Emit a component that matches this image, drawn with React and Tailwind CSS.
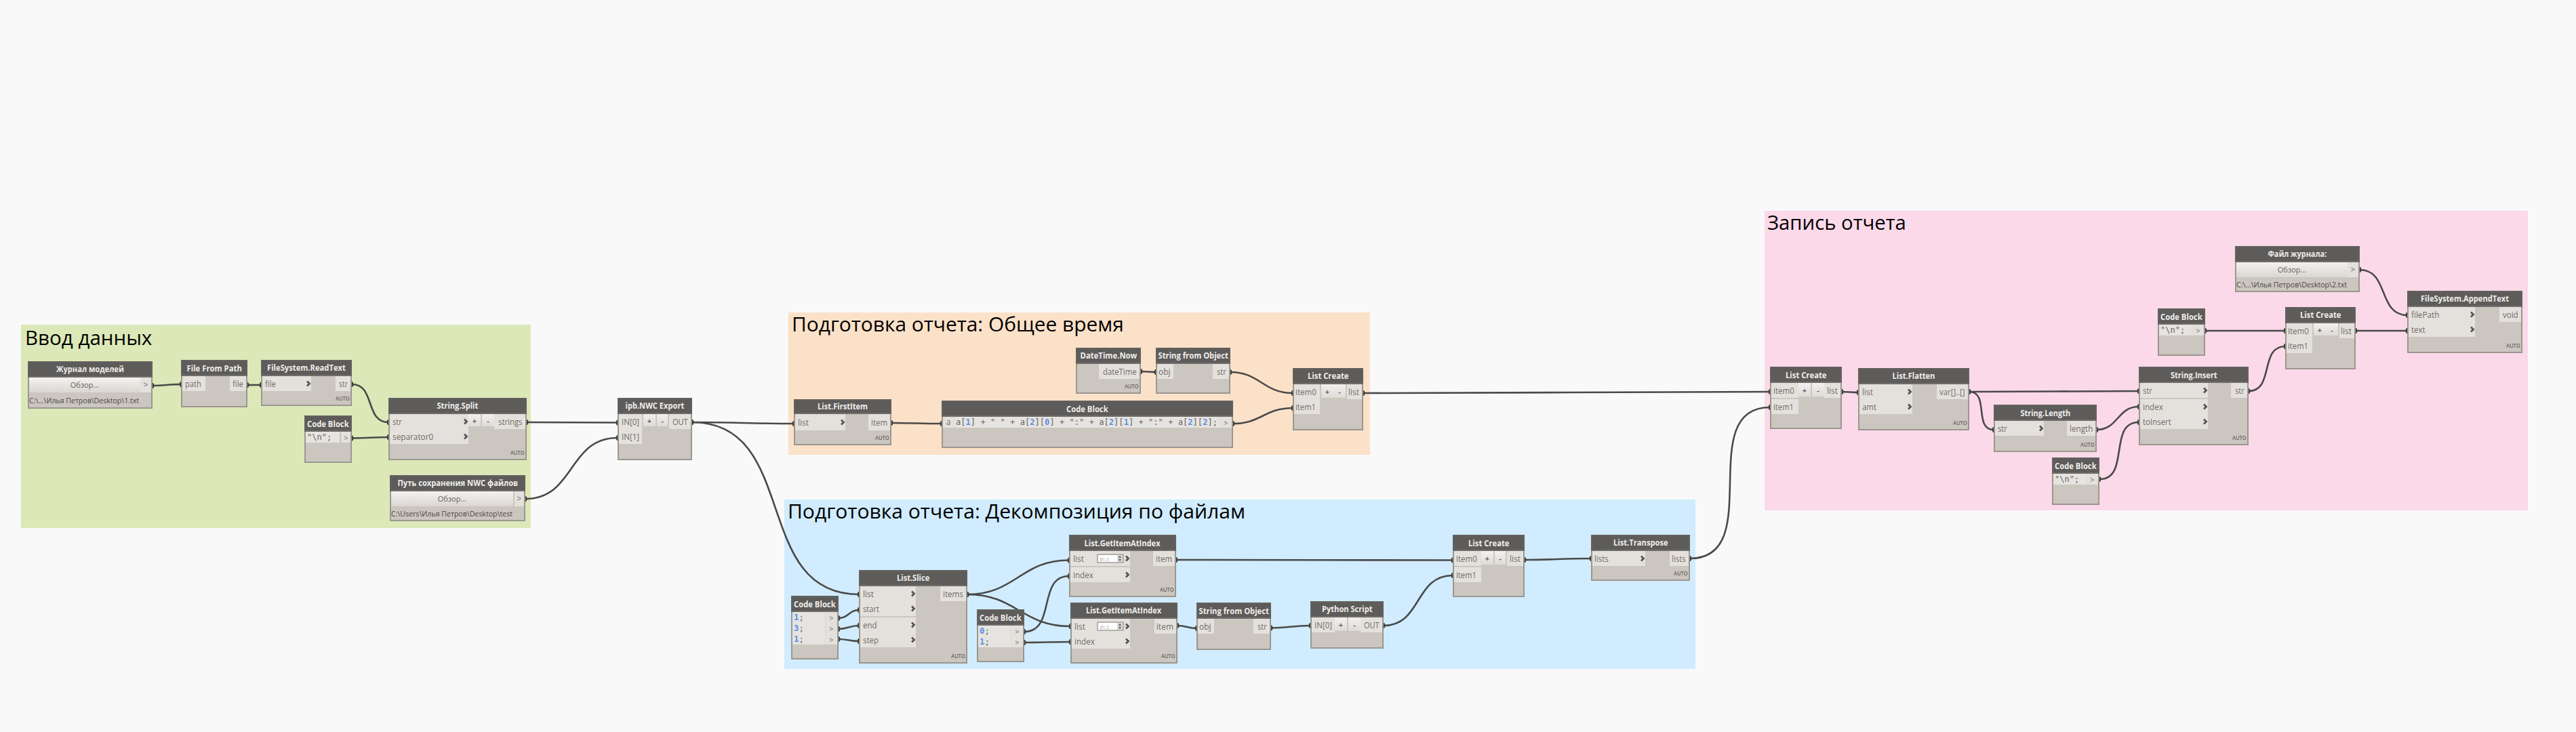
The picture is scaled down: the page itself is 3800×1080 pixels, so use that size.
import React, { useLayoutEffect, useRef, useState } from "react";

const SANS = "font-['Open_Sans','Noto_Sans',sans-serif]";
const MONO = "font-['DejaVu_Sans_Mono','Liberation_Mono',monospace]";

/* Text squeezed or stretched horizontally to a given width. */
function Fit({ w, origin = "center", className = "", children }) {
  const ref = useRef(null);
  const [k, setK] = useState(1);
  useLayoutEffect(() => {
    if (w && ref.current) setK(w / ref.current.offsetWidth);
  }, [w]);
  return (
    <span
      ref={ref}
      className={"inline-block shrink-0 whitespace-pre " + className}
      style={{ transform: `scaleX(${k})`, transformOrigin: origin }}
    >
      {children}
    </span>
  );
}

const groups = [
  { x: 31, y: 479, w: 752, h: 300, title: "Ввод данных", tx: 6, ty: 2, tw: 187, bg: "bg-[#dce8b8]" },
  { x: 1163, y: 461, w: 858, h: 210, title: "Подготовка отчета: Общее время", tx: 5, ty: 0, tw: 490, bg: "bg-[#fbe1c8]" },
  { x: 1157, y: 737, w: 1344, h: 250, title: "Подготовка отчета: Декомпозиция по файлам", tx: 5, ty: 0, tw: 675, bg: "bg-[#d0ecfe]" },
  { x: 2603, y: 311, w: 1126, h: 442, title: "Запись отчета", tx: 4, ty: 0, tw: 205, bg: "bg-[#fbd9e9]" },
];

/*
 * iw / ow: widths of the port columns.
 * btn: [left gap, width of "+", gap, width of "-", height].
 * low: the title sits one pixel lower in its bar.
 */
const nodes = [
  { k: "file", x: 41, y: 533, w: 184, h: 70, title: "Журнал моделей", tw: 100, path: "C:\\...\\Илья Петров\\Desktop\\1.txt", pw: 162, bw: 164, gap: 0 },
  { x: 267, y: 531, w: 98, h: 70, low: 1, title: "File From Path", tw: 81, ins: [["path", 24]], iw: 34, out: ["file", 16], ow: 24 },
  { x: 385, y: 531, w: 134, h: 68, title: "FileSystem.ReadText", tw: 116, ins: [["file", 16]], iw: 72, arrow: 1, out: ["str", 13], ow: 22, auto: 1 },
  { x: 573, y: 587, w: 204, h: 92, title: "String.Split", tw: 61, ins: [["str", 14], ["separator0", 60]], iw: 116, arrow: 1, btn: [0, 18, 2, 18, 18], out: ["strings", 36], ow: 46, auto: 1 },
  { k: "code", x: 449, y: 613, w: 70, h: 70, lines: ['"\\n";'], cw: 50, gap: 2 },
  { k: "file", x: 575, y: 701, w: 200, h: 68, title: "Путь сохранения NWC файлов", tw: 178, path: "C:\\Users\\Илья Петров\\Desktop\\test", pw: 179, bw: 180, gap: 2 },
  { x: 911, y: 587, w: 110, h: 92, title: "ipb.NWC Export", tw: 87, ins: [["IN[0]", 26], ["IN[1]", 26]], iw: 34, btn: [2, 18, 2, 16, 18], out: ["OUT", 23], ow: 32 },
  { x: 1171, y: 589, w: 144, h: 68, hh: 22, rh: 24, title: "List.FirstItem", tw: 74, ins: [["list", 16]], iw: 74, arrow: 1, out: ["item", 24], ow: 32, auto: 1 },
  { k: "long", x: 1389, y: 591, w: 430, h: 70 },
  { x: 1587, y: 513, w: 96, h: 68, title: "DateTime.Now", tw: 84, ins: [], iw: 0, out: ["dateTime", 50], ow: 60, auto: 1 },
  { x: 1705, y: 513, w: 110, h: 68, title: "String from Object", tw: 103, ins: [["obj", 18]], iw: 24, ip: 2, out: ["str", 14], ow: 24 },
  { x: 1907, y: 543, w: 104, h: 92, title: "List Create", tw: 60, ins: [["item0", 31], ["item1", 30]], iw: 38, ip: 2, btn: [2, 18, 0, 18, 20], out: ["list", 16], ow: 22 },
  { k: "code", x: 1167, y: 879, w: 70, h: 94, lines: ["1;", "3;", "1;"], cw: 48, gap: 0 },
  { x: 1267, y: 841, w: 160, h: 138, title: "List.Slice", tw: 48, ins: [["list", 16], ["start", 24], ["end", 20], ["step", 23]], iw: 82, split: 2, arrow: 1, out: ["items", 30], ow: 38, auto: 1 },
  { k: "code", x: 1441, y: 899, w: 70, h: 78, lines: ["0;", "1;"], cw: 48, gap: 0 },
  { x: 1577, y: 789, w: 158, h: 92, low: 1, title: "List.GetItemAtIndex", tw: 112, ins: [["list", 16], ["index", 30]], iw: 88, split: 1, spin: 1, arrow: 1, out: ["item", 24], ow: 32, auto: 1 },
  { x: 1579, y: 889, w: 158, h: 90, title: "List.GetItemAtIndex", tw: 111, ins: [["list", 16], ["index", 30]], iw: 86, spin: 1, arrow: 1, out: ["item", 25], ow: 32, auto: 1 },
  { x: 1765, y: 889, w: 110, h: 70, low: 1, title: "String from Object", tw: 103, ins: [["obj", 18]], iw: 24, ip: 2, out: ["str", 14], ow: 24 },
  { x: 1933, y: 887, w: 108, h: 70, title: "Python Script", tw: 75, ins: [["IN[0]", 26]], iw: 34, ip: 4, btn: [0, 18, 2, 18, 20], out: ["OUT", 23], ow: 32 },
  { x: 2143, y: 789, w: 106, h: 92, low: 1, title: "List Create", tw: 60, ins: [["item0", 31], ["item1", 30]], iw: 40, split: 1, ip: 3, btn: [0, 18, 2, 16, 20], out: ["list", 16], ow: 24 },
  { x: 2347, y: 789, w: 146, h: 68, title: "List.Transpose", tw: 81, ins: [["lists", 21]], iw: 78, ip: 3, arrow: 1, out: ["lists", 21], ow: 28, auto: 1 },
  { x: 2611, y: 541, w: 106, h: 92, low: 1, title: "List Create", tw: 60, ins: [["item0", 31], ["item1", 30]], iw: 40, split: 1, ip: 3, btn: [0, 18, 2, 18, 20], out: ["list", 16], ow: 24 },
  { x: 2741, y: 543, w: 164, h: 92, title: "List.Flatten", tw: 63, ins: [["list", 16], ["amt", 21]], iw: 78, arrow: 1, out: ["var[]..[]", 38], ow: 46, auto: 1 },
  { x: 2941, y: 597, w: 152, h: 70, low: 1, title: "String.Length", tw: 74, ins: [["str", 14]], iw: 72, arrow: 1, out: ["length", 34], ow: 42, auto: 1 },
  { k: "code", x: 3027, y: 675, w: 70, h: 70, lines: ['"\\n";'], cw: 48, gap: 0 },
  { k: "code", x: 3183, y: 455, w: 70, h: 70, lines: ['"\\n";'], cw: 48, gap: 0 },
  { x: 3155, y: 541, w: 162, h: 116, low: 1, title: "String.Insert", tw: 69, ins: [["str", 14], ["index", 30], ["toInsert", 42]], iw: 100, split: 1, arrow: 1, out: ["str", 14], ow: 24, auto: 1 },
  { k: "file", x: 3297, y: 363, w: 184, h: 68, title: "Файл журнала:", tw: 87, path: "C:\\...\\Илья Петров\\Desktop\\2.txt", pw: 163, bw: 164, gap: 0 },
  { x: 3371, y: 453, w: 104, h: 92, title: "List Create", tw: 60, ins: [["item0", 31], ["item1", 30]], iw: 38, ip: 2, btn: [2, 18, 0, 18, 18], out: ["list", 16], ow: 22 },
  { x: 3551, y: 429, w: 170, h: 92, title: "FileSystem.AppendText", tw: 130, ins: [["filePath", 41], ["text", 21]], iw: 98, ip: 4, arrow: 1, out: ["void", 23], ow: 32, auto: 1 },
];

const wires = [
  [225, 569, 267, 567], [365, 568, 385, 568], [519, 567, 573, 623], [519, 646.5, 573, 645],
  [777, 623, 911, 623.5], [775, 736, 911, 646], [1021, 623, 1171, 625], [1021, 623, 1267, 877],
  [1315, 624, 1389, 625], [1683, 548, 1705, 549], [1815, 549, 1907, 580], [1819, 625, 1907, 602],
  [2011, 580, 2611, 578], [1237, 912, 1267, 900], [1237, 928, 1267, 923], [1237, 943, 1267, 946],
  [1427, 877, 1577, 826.5], [1427, 877, 1579, 924], [1511, 932, 1577, 850], [1511, 948, 1579, 947],
  [1735, 826, 2143, 826.5], [1737, 923, 1765, 927], [1875, 926.5, 1933, 923], [2041, 923, 2143, 849],
  [2249, 826, 2347, 824], [2493, 824, 2611, 601], [2717, 578, 2741, 579], [2905, 578, 3155, 577],
  [2905, 578, 2941, 634], [3093, 634, 3155, 600], [3097, 707, 3155, 623], [3253, 488, 3371, 488],
  [3317, 577, 3371, 511], [3475, 488, 3551, 488], [3481, 398, 3551, 465],
];

function curve([x1, y1, x2, y2]) {
  const o = 0.45 * Math.hypot(x2 - x1, y2 - y1);
  return `M${x1} ${y1}C${x1 + o} ${y1} ${x2 - o} ${y2} ${x2} ${y2}`;
}

function Shell({ n, title, tw, low, children }) {
  return (
    <section
      className={"absolute flex flex-col bg-[#cbc6bf] " + SANS}
      style={{ left: n.x, top: n.y, width: n.w, height: n.h }}
    >
      <header
        className={
          "flex shrink-0 items-center justify-center border-2 border-[#63615e] border-b-[#716f6c] bg-[#5e5c5a] " +
          (low ? "pt-[2px]" : "")
        }
        style={{ height: n.hh || 24 }}
      >
        <Fit w={tw} className="text-[12px] leading-[18px] font-bold text-[#f0eeec]">{title}</Fit>
      </header>
      <div className="flex grow flex-col border-2 border-t-0 border-[#9b978f]">{children}</div>
    </section>
  );
}

function Chevron() {
  return (
    <svg className="h-[10px] w-[8px] shrink-0" viewBox="0 0 8 10">
      <path d="M2 1.5L5.5 5L2 8.5" fill="none" stroke="#55555a" strokeWidth="2.8" />
    </svg>
  );
}

function Spinner() {
  return (
    <span className="mr-[1px] flex h-[14px] w-[40px] shrink-0 border-2 border-[#b5b2ae] bg-white">
      <span className="grow pl-[2px] text-[9px] leading-[11px] text-[#bdbbc2]">{"øı.s"}</span>
      <span className="flex w-[8px] flex-col items-center justify-between bg-[#d8d6d3] py-[1px]">
        <svg className="h-[3px] w-[4px]" viewBox="0 0 4 3"><path d="M0 3L2 0L4 3Z" fill="#555" /></svg>
        <svg className="h-[3px] w-[4px]" viewBox="0 0 4 3"><path d="M0 0L2 3L4 0Z" fill="#555" /></svg>
      </span>
    </span>
  );
}

function FunctionNode({ n }) {
  const rh = n.rh || 22;
  const b = n.btn;
  return (
    <Shell n={n} title={n.title} tw={n.tw} low={n.low}>
      <div className="flex items-start">
        <div className="flex flex-col" style={{ width: n.iw }}>
          {n.ins.map(([t, w], i) => (
            <div
              key={t}
              className="flex items-center bg-[#e4e1dd]"
              style={{ height: rh, paddingLeft: n.ip ?? 4, marginTop: n.split === i ? 2 : 0 }}
            >
              <Fit w={w} origin="left" className="pt-px text-[12px] leading-[18px] text-[#6f6b67]">{t}</Fit>
              <span className="grow" />
              {n.spin && i === 0 ? <Spinner /> : null}
              {n.arrow ? <Chevron /> : null}
            </div>
          ))}
        </div>
        {b ? (
          <div className="flex text-[11px] font-bold leading-none text-[#5f5f68]" style={{ marginLeft: b[0], gap: b[2], height: b[4] }}>
            <span className="flex items-center justify-center bg-linear-to-b from-[#f2f1ef] to-[#dedbd7]" style={{ width: b[1] }}>+</span>
            <span className="flex items-center justify-center bg-linear-to-b from-[#f2f1ef] to-[#dedbd7]" style={{ width: b[3] }}>-</span>
          </div>
        ) : null}
        <div className="ml-auto flex items-center justify-end bg-[#e4e1dd] pr-[4px]" style={{ width: n.ow, height: rh }}>
          <Fit w={n.out[1]} origin="right" className="pt-px text-[12px] leading-[18px] text-[#6f6b67]">{n.out[0]}</Fit>
        </div>
      </div>
      {n.auto ? (
        <div className="mt-auto flex h-[18px] items-center justify-end pr-[1px]">
          <Fit w={21} origin="right" className="text-[9px] leading-[10px] font-semibold text-[#6b6762]">AUTO</Fit>
        </div>
      ) : null}
    </Shell>
  );
}

function FileNode({ n }) {
  return (
    <Shell n={n} title={n.title} tw={n.tw}>
      <div className="flex h-[22px]" style={{ gap: n.gap }}>
        <div className="flex items-center justify-center bg-linear-to-b from-[#f3f2f0] to-[#dad7d2] pb-px" style={{ width: n.bw }}>
          <Fit w={42} className="text-[11px] leading-[16px] text-[#66635f]">Обзор...</Fit>
        </div>
        <div className="flex grow items-center justify-center bg-[#e4e1dd] text-[12px] leading-none text-[#6f6b67]">&gt;</div>
      </div>
      <div className="flex grow items-center pt-px">
        <Fit w={n.pw} origin="left" className="text-[11px] leading-[14px] text-[#4a4643]">{n.path}</Fit>
      </div>
    </Shell>
  );
}

function Code({ text }) {
  return text.split(/(\d)/).map((s, i) => (
    <span key={i} className={i % 2 ? "font-bold text-[#5b8fe6]" : "text-[#68645f]"}>{s}</span>
  ));
}

function CodeNode({ n }) {
  return (
    <Shell n={n} title="Code Block" tw={62} low>
      {n.lines.map((l, i) => (
        <div key={i} className="flex h-4" style={{ gap: n.gap }}>
          <div className="flex items-center bg-[#e6e4e1] pl-[2px]" style={{ width: n.cw }}>
            <Fit w={l.length * 7.2} origin="left" className={"text-[12px] leading-[16px] " + MONO}><Code text={l} /></Fit>
          </div>
          <div className="flex grow items-center justify-center border-l border-[#dddad6] bg-[#e4e1dd] text-[11px] leading-none text-[#6f6b67]">&gt;</div>
        </div>
      ))}
    </Shell>
  );
}

function LongCodeNode({ n }) {
  return (
    <Shell n={n} title="Code Block" tw={62} low>
      <div className="flex h-4">
        <div className="flex w-[17px] items-center justify-center border-r border-[#dddad6] bg-[#e4e1dd]">
          <span className="text-[12px] leading-[16px] text-[#6f6b67]">a</span>
        </div>
        <div className="flex w-[391px] items-center bg-[#e6e4e1] pl-[2px]">
          <Fit w={386} origin="left" className={"text-[12px] leading-[16px] " + MONO}>
            <Code text={'a[1] + " " + a[2][0] + ":" + a[2][1] + ":" + a[2][2];'} />
          </Fit>
        </div>
        <div className="flex grow items-center justify-center border-l border-[#dddad6] bg-[#e4e1dd] text-[11px] leading-none text-[#6f6b67]">&gt;</div>
      </div>
    </Shell>
  );
}

const kinds = { file: FileNode, code: CodeNode, long: LongCodeNode };

export default function App() {
  return (
    <main className="relative h-[1080px] w-[3800px] overflow-hidden bg-[#f9f9f9]">
      {groups.map((g) => (
        <section
          key={g.title}
          className={"absolute " + g.bg}
          style={{ left: g.x, top: g.y, width: g.w, height: g.h, paddingLeft: g.tx, paddingTop: g.ty }}
        >
          <Fit w={g.tw} origin="left" className={"text-[30px] leading-[34px] text-black " + SANS}>{g.title}</Fit>
        </section>
      ))}
      <svg className="absolute inset-0 h-[1080px] w-[3800px]" viewBox="0 0 3800 1080">
        {wires.map((w, i) => (
          <g key={i}>
            <path d={curve(w)} fill="none" stroke="#4a4a4a" strokeWidth="2.6" />
            <path d={`M${w[0]} ${w[1] - 4}h1q3 4 0 8h-1z`} fill="#3f3f3f" />
            <path d={`M${w[2]} ${w[3] - 4}h-1q-3 4 0 8h1z`} fill="#3f3f3f" />
          </g>
        ))}
      </svg>
      {nodes.map((n, i) => {
        const Kind = kinds[n.k] || FunctionNode;
        return <Kind key={i} n={n} />;
      })}
    </main>
  );
}
